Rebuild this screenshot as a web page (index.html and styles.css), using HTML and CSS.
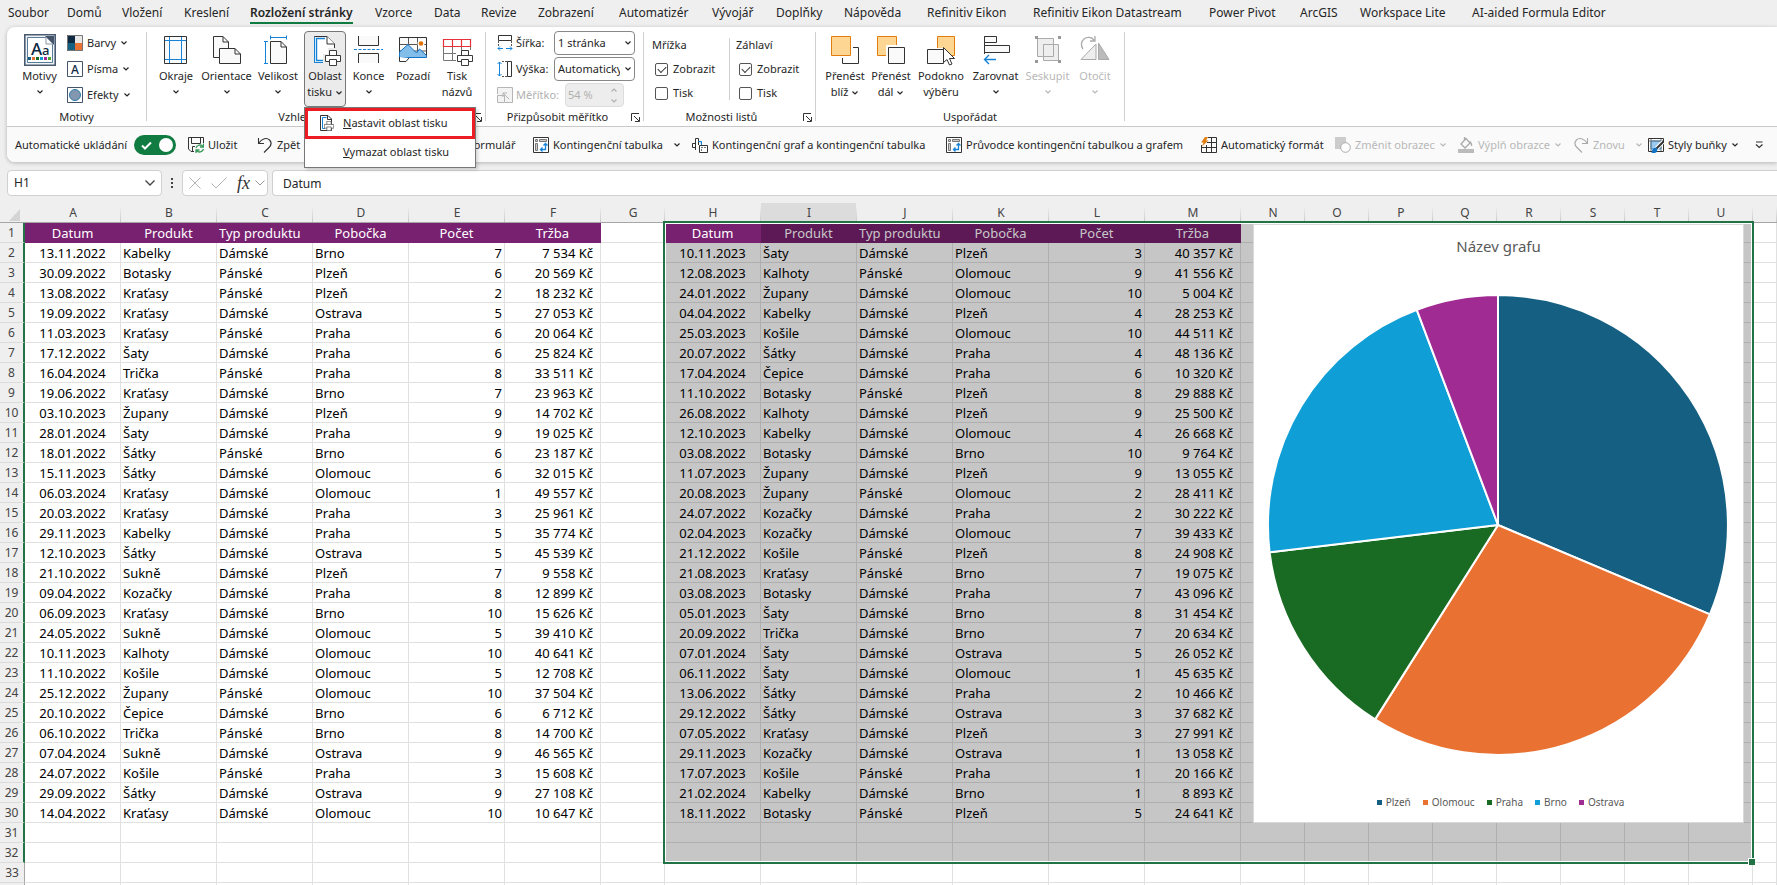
FILE: index.html
```html
<!DOCTYPE html>
<html lang="cs">
<head>
<meta charset="utf-8">
<title>Sešit – Rozložení stránky</title>
<link rel="stylesheet" href="styles.css">
</head>
<body>
<svg class="defs" aria-hidden="true">
  <symbol id="chev" viewBox="0 0 8 6"><path d="M1.500 1.500L4 4 6.500 1.500" fill="none" stroke="currentColor" stroke-width="1.200"/></symbol>
  <symbol id="printer" viewBox="0 0 16 16"><g fill="#fff" stroke="#3b3b3b"><path d="M4.500 5.500V.5H11.500V5.500"/><path d="M.5 5.500H15.500V11.500H.5Z"/><path d="M4.500 9.500H11.500V15.500H4.500Z"/></g></symbol>
  <symbol id="launch" viewBox="0 0 9 9"><path d="M.5 8V.5H8M3 3l5 5M8.500 4V8.500H4" fill="none" stroke="#333"/></symbol>
  <symbol id="pivot" viewBox="0 0 16 16"><path d="M.5.5H15.500V15.500H.5Z" fill="#fff" stroke="#333"/><path d="M2.500 2.500h2v2h-2zM6.500 2.500h7v2h-7zM2.500 6.500h2v7h-2z" fill="#ccc" stroke="#777"/><path d="M8 12.500H12.500V7M9.500 10.500l-2 2 2 2M10.500 8.500l2-2 2 2" fill="none" stroke="#1683d8" stroke-width="1.300"/></symbol>
</svg>

<nav class="tabs">
  <button>Soubor</button><button>Domů</button><button>Vložení</button><button>Kreslení</button><button class="active">Rozložení stránky</button><button>Vzorce</button><button>Data</button><button>Revize</button><button>Zobrazení</button><button>Automatizér</button><button>Vývojář</button><button>Doplňky</button><button>Nápověda</button><button>Refinitiv Eikon</button><button>Refinitiv Eikon Datastream</button><button>Power Pivot</button><button>ArcGIS</button><button>Workspace Lite</button><button>AI-aided Formula Editor</button>
</nav>

<header class="ribbon">
  <div class="groups">
    <section class="group g-themes">
      <div class="body">
        <button class="big"><svg class="ic" viewBox="0 0 32 32"><path d="M.8.8H31.200V31.200H.8Z" fill="#eef3f7" stroke="#4a5a70" stroke-width="1.600"/><path d="M3.500 3.500H22L28.500 10V28.500H3.500Z" fill="#fff" stroke="#5b7c99"/><path d="M21 2h9v9z" fill="#44546a"/><path d="M22 3V10H29Z" fill="#fff" stroke="#8a96a5"/><text x="7" y="21" class="aa" font-size="17">A</text><text x="18" y="21" class="aa" font-size="13">a</text><path d="M4 23h3v3H4z" fill="#156082"/><path d="M8 23h3v3H8z" fill="#e97132"/><path d="M12 23h3v3h-3z" fill="#196b24"/><path d="M16 23h3v3h-3z" fill="#0f9ed5"/><path d="M20 23h3v3h-3z" fill="#a02b93"/><path d="M24 23h3v3h-3z" fill="#4ea72e"/></svg><span>Motivy</span><svg class="cv"><use href="#chev"/></svg></button>
        <div class="stack">
          <button class="small"><svg class="si" viewBox="0 0 16 16"><path d="M0 0h8v8H0z" fill="#0e2841"/><path d="M8 0h8v8H8z" fill="#e8e8e8"/><path d="M0 8h8v8H0z" fill="#156082"/><path d="M8 8h8v8H8z" fill="#e97132"/><path d="M.5.5h15v15H.5z" fill="none" stroke="#777"/></svg>Barvy<svg class="cv"><use href="#chev"/></svg></button>
          <button class="small"><svg class="si" viewBox="0 0 16 16"><path d="M.5.5h15v15H.5z" fill="#fff" stroke="#44546a"/><text x="4" y="13" class="aa" font-size="12">A</text></svg>Písma<svg class="cv"><use href="#chev"/></svg></button>
          <button class="small"><svg class="si" viewBox="0 0 16 16"><path d="M.5.5h15v15H.5z" fill="#fff" stroke="#44546a"/><circle cx="8" cy="8" r="5.500" fill="#8497b0" stroke="#2a7ca8"/></svg>Efekty<svg class="cv"><use href="#chev"/></svg></button>
        </div>
      </div>
      <div class="caption">Motivy</div>
    </section>
    <i class="sep"></i>
    <section class="group g-page">
      <div class="body">
        <button class="big"><svg class="ic" viewBox="0 0 32 32"><path d="M4.500 2.500H26.500V29.500H4.500Z" fill="#fafafa" stroke="#333"/><path d="M9.500 3V29M21.500 3V29M5 6.500H26M5 25.500H26" stroke="#1683d8"/></svg><span>Okraje</span><svg class="cv"><use href="#chev"/></svg></button>
        <button class="big"><svg class="ic" viewBox="0 0 32 32"><path d="M8 23.500H2.500V2.500H12L17.500 8V14" fill="#fafafa" stroke="#333"/><path d="M12 2.500V8H17.500" fill="none" stroke="#333"/><path d="M8.500 14.500H24L29.500 20V29.500H8.500Z" fill="#fafafa" stroke="#333"/><path d="M24 14.500V20H29.500" fill="none" stroke="#333"/></svg><span>Orientace</span><svg class="cv"><use href="#chev"/></svg></button>
        <button class="big"><svg class="ic" viewBox="0 0 32 32"><path d="M8.500 7.500H19L24.500 13V29.500H8.500Z" fill="#fafafa" stroke="#333"/><path d="M19 7.500V13H24.500" fill="none" stroke="#333"/><path d="M8.500 1.500v4M24.500 1.500v4M8.500 3.500h16M2 7.500h4M2 29.500h4M3.500 7.500v22" fill="none" stroke="#1683d8"/></svg><span>Velikost</span><svg class="cv"><use href="#chev"/></svg></button>
        <div class="drop">
          <button class="big pressed"><svg class="ic" viewBox="0 0 32 32"><path d="M5.500 2.500H18L25.500 10V28.500H5.500Z" fill="#fff" stroke="#333"/><path d="M16 4.500H7.500V26.500H15" fill="none" stroke="#1683d8" stroke-width="1.400"/><path d="M5.500 3V28.500H14" fill="none" stroke="#1683d8"/><path d="M18 2.500V10H25.500" fill="#fff" stroke="#333"/><path d="M14 20H19V14H29V20H32V32H14Z" fill="#ebebeb"/><use href="#printer" x="16" y="16" width="16" height="16"/></svg><span>Oblast</span><span>tisku <svg class="cv"><use href="#chev"/></svg></span></button>
          <div class="menu">
            <button class="marked"><svg class="mi" viewBox="0 0 16 16"><path d="M1.500.5H9L12.500 4V15.500H1.500Z" fill="#fff" stroke="#333"/><path d="M7.500 2.500H3.500V13.500H6" fill="none" stroke="#1683d8"/><path d="M8.500.5V4.500H12.500" fill="none" stroke="#333"/><use href="#printer" x="5" y="6" width="10" height="10"/></svg><span><u>N</u>astavit oblast tisku</span></button>
            <button><i class="mi"></i><span><u>V</u>ymazat oblast tisku</span></button>
          </div>
        </div>
        <button class="big"><svg class="ic" viewBox="0 0 32 32"><path d="M5.500 2V11.500H25.500V2M5.500 29V19.500H25.500V29" fill="#fafafa" stroke="#333"/><path d="M1 15.500H30" stroke="#1683d8" stroke-dasharray="3 1.500"/></svg><span>Konce</span><svg class="cv"><use href="#chev"/></svg></button>
        <button class="big"><svg class="ic" viewBox="0 0 32 32"><path d="M2.500 3.500H29.500V23H2.500Z" fill="#fafafa" stroke="#333"/><path d="M11.500 4V22M20.500 4V22M3 10.500H29M3 17H29" stroke="#555"/><path d="M2.500 18L11 10.500 19.500 19 22.500 15 29.500 21.500V23.500H2.500Z" fill="#83bdea" stroke="#1272c4"/><circle cx="24" cy="9.500" r="3.500" fill="#fff"/><circle cx="24" cy="9.500" r="2.300" fill="#e07000"/><path d="M2.500 23V27.500H9L12 24" fill="#fff" stroke="#333"/></svg><span>Pozadí</span></button>
        <button class="big"><svg class="ic" viewBox="0 0 32 32"><path d="M2.500 12.500V26.500H15M11.500 13V26M20.500 13V17M29.500 13V16M3 19.500H15" fill="none" stroke="#777"/><path d="M2.500 5.500H29.500V12.500H2.500ZM11.500 6V12M20.500 6V12" fill="#fff" stroke="#e8303a" stroke-width="1.200"/><use href="#printer" x="16" y="16" width="16" height="16"/></svg><span>Tisk</span><span>názvů</span></button>
      </div>
      <div class="caption">Vzhled stránky<svg class="launch"><use href="#launch"/></svg></div>
    </section>
    <i class="sep"></i>
    <section class="group g-scale">
      <div class="body stack">
        <div class="field"><svg class="si" viewBox="0 0 16 16"><path d="M1.500.5H14.500V5.500H1.500Z" fill="#fff" stroke="#333"/><path d="M1.500 6V11M14.500 6V11" stroke="#555" stroke-dasharray="2 1"/><path d="M1 13.500H6M9 13.500H15M3 11.500l-2 2 2 2M13 11.500l2 2-2 2" fill="none" stroke="#1683d8"/></svg><label for="w">Šířka:</label><span class="combo"><select id="w"><option>1 stránka</option></select><svg class="cv"><use href="#chev"/></svg></span></div>
        <div class="field"><svg class="si" viewBox="0 0 16 16"><path d="M2.500 1V15M.5 3l2-2 2 2M.5 13l2 2 2-2" fill="none" stroke="#1683d8"/><path d="M10.500.5H14.500V15.500H10.500Z" fill="#fff" stroke="#333"/><path d="M5 .5H10M5 15.500H10" stroke="#555" stroke-dasharray="2 1"/></svg><label for="h">Výška:</label><span class="combo"><select id="h"><option>Automaticky</option></select><svg class="cv"><use href="#chev"/></svg></span></div>
        <div class="field off"><svg class="si" viewBox="0 0 16 16"><path d="M.5 7V.5H15.500V15.500H8M.5 8.500H7.500V15.500H.5ZM6 6l6 6M6 10V6H10" fill="#f3f3f3" stroke="#b5b5b5"/></svg><label for="m">Měřítko:</label><span class="spin"><input id="m" value="54 %" disabled><span class="arrows"><svg class="cv up"><use href="#chev"/></svg><svg class="cv"><use href="#chev"/></svg></span></span></div>
      </div>
      <div class="caption">Přizpůsobit měřítko<svg class="launch"><use href="#launch"/></svg></div>
    </section>
    <i class="sep"></i>
    <section class="group g-sheet">
      <div class="body">
        <div class="checks"><span>Mřížka</span><label><input type="checkbox" checked>Zobrazit</label><label><input type="checkbox">Tisk</label></div>
        <i class="sep inner"></i>
        <div class="checks"><span>Záhlaví</span><label><input type="checkbox" checked>Zobrazit</label><label><input type="checkbox">Tisk</label></div>
      </div>
      <div class="caption">Možnosti listů<svg class="launch"><use href="#launch"/></svg></div>
    </section>
    <i class="sep"></i>
    <section class="group g-arrange">
      <div class="body">
        <button class="big"><svg class="ic" viewBox="0 0 32 32"><path d="M13.500 13.500H29.500V29.500H13.500Z" fill="#fff" stroke="#333"/><path d="M1 1H24V24H1Z" fill="#fff"/><path d="M2.500 2.500H21.500V21.500H2.500Z" fill="#fdd693" stroke="#e07f10"/></svg><span>Přenést</span><span>blíž <svg class="cv"><use href="#chev"/></svg></span></button>
        <button class="big"><svg class="ic" viewBox="0 0 32 32"><path d="M2.500 2.500H21.500V21.500H2.500Z" fill="#fdd693" stroke="#e07f10"/><path d="M11 11H32V32H11Z" fill="#fff"/><path d="M13.500 13.500H29.500V29.500H13.500Z" fill="#fafafa" stroke="#333"/></svg><span>Přenést</span><span>dál <svg class="cv"><use href="#chev"/></svg></span></button>
        <button class="big"><svg class="ic" viewBox="0 0 32 32"><path d="M12.500 2.500H29.500V21.500H12.500Z" fill="#fdd693" stroke="#e07f10"/><path d="M1 14H20V31H1Z" fill="#fff"/><path d="M2.500 15.500H18.500V29.500H2.500Z" fill="#fafafa" stroke="#333"/><path d="M18.500 13.500V28.500L22 25.500 24.500 31 27 30 24.500 24.500H29.500Z" fill="#fff" stroke="#333"/></svg><span>Podokno</span><span>výběru</span></button>
        <button class="big"><svg class="ic" viewBox="0 0 32 32"><path d="M4.500 2V30" stroke="#333"/><path d="M4.500 2.500H16.500V8.500H4.500ZM4.500 11.500H29.500V18.500H4.500Z" fill="#fafafa" stroke="#333"/><path d="M3 20H6V31H3Z" fill="#fff"/><path d="M4.500 25.500H16M9 21l-4.500 4.500L9 30" fill="none" stroke="#1683d8" stroke-width="1.400"/></svg><span>Zarovnat</span><svg class="cv"><use href="#chev"/></svg></button>
        <button class="big" disabled><svg class="ic" viewBox="0 0 32 32"><g fill="#eee" stroke="#aaa"><path d="M5.500 4.500H21.500V22.500H5.500Z"/><path d="M11.500 10.500H26.500V26.500H11.500Z"/><path d="M11.500 10.500H21.500V22.500H11.500Z"/></g><path d="M3 2h3v3H3zM26 2h3v3h-3zM3 26h3v3H3zM26 26h3v3h-3z" fill="#999"/></svg><span>Seskupit</span><svg class="cv"><use href="#chev"/></svg></button>
        <button class="big" disabled><svg class="ic" viewBox="0 0 32 32"><path d="M2 25.500H17V10Z" fill="#eee" stroke="#aaa"/><path d="M19.500 9V25.500H30Z" fill="#bbb" stroke="#aaa"/><path d="M4 15A7 7 0 1 1 15 6M11 7h5V2" fill="none" stroke="#aaa" stroke-width="1.300"/></svg><span>Otočit</span><svg class="cv"><use href="#chev"/></svg></button>
      </div>
      <div class="caption">Uspořádat</div>
    </section>
    <i class="sep"></i>
  </div>
  <div class="quick">
    <label for="auto">Automatické ukládání</label>
    <span class="toggle"><input id="auto" type="checkbox" checked><svg viewBox="0 0 42 20"><path d="M8 10.500l3 3 6-6" fill="none" stroke="#fff" stroke-width="2"/><circle cx="32" cy="10" r="7" fill="#fff"/></svg></span>
    <button><svg class="si" viewBox="0 0 16 16"><path d="M6 14.500H3L.5 12V.5H15.500V6M3.500 1V6.500H12.500V1M4.500 14V9.500H7" fill="none" stroke="#333"/><path d="M8 11a4 4 0 0 1 7-1.500M15.500 6.500V10H12M15.500 12a4 4 0 0 1-7 1.500M8 16V13h3.500" fill="none" stroke="#3a9a5c" stroke-width="1.300"/></svg>Uložit</button>
    <button><svg class="si" viewBox="0 0 16 16"><path d="M1.500 1V6.500H7M1.500 6.500C5 1 10 .5 12.500 3S14 8.500 12 10.500L7 15.500" fill="none" stroke="#333" stroke-width="1.100"/></svg>Zpět</button>
    <button><svg class="si" viewBox="0 0 16 16"><path d="M.5.5H15.500V15.500H.5Z" fill="#fff" stroke="#333"/></svg>Formulář</button>
    <button><svg class="si"><use href="#pivot"/></svg>Kontingenční tabulka<svg class="cv far"><use href="#chev"/></svg></button>
    <button><svg class="si" viewBox="0 0 16 16"><path d="M3 10.500H.5V6.500H3.500M3.500 13V1.500H6.500V8" fill="#fff" stroke="#333"/><path d="M6.500 4.500H9.500V8" fill="#bfdcf5" stroke="#1683d8"/><path d="M7.500 8.500H15.500V15.500H7.500Z" fill="#fff" stroke="#333"/><path d="M9 10.500H11M12 10.500H14M9.500 12V14" stroke="#777"/></svg>Kontingenční graf a kontingenční tabulka</button>
    <button><svg class="si"><use href="#pivot"/></svg>Průvodce kontingenční tabulkou a grafem</button>
    <button><svg class="si" viewBox="0 0 16 16"><path d="M7 .5H15.500V15.500H.5V8M15 5.500H6M15 10.500H1M5.500 8V15M10.500 1V15" fill="none" stroke="#333"/><path d="M4 0H7L5 3.500H7.500L1 9.500 2.500 5.500H0Z" fill="#e07f10"/></svg>Automatický formát</button>
    <button disabled><svg class="si" viewBox="0 0 16 16"><path d="M0 0H11V6L6 12H0Z" fill="#ccc"/><circle cx="10.500" cy="10.500" r="4.800" fill="#fff" stroke="#aaa"/></svg>Změnit obrazec<svg class="cv"><use href="#chev"/></svg></button>
    <button disabled><svg class="si" viewBox="0 0 16 16"><path d="M0 12h16v4H0z" fill="#bbb"/><path d="M8 1.500L3 7l4 4 5-5ZM6.500 0V4M12 4.500Q14 7 13.500 9" fill="none" stroke="#aaa" stroke-width="1.300"/></svg>Výplň obrazce<svg class="cv"><use href="#chev"/></svg></button>
    <button disabled><svg class="si" viewBox="0 0 16 16"><path d="M14.500 1V6.500H9M14.500 6.500C11 1 6 .5 3.500 3S2 8.500 4 10.500L9 15.500" fill="none" stroke="#aaa" stroke-width="1.100"/></svg>Znovu<svg class="cv far"><use href="#chev"/></svg></button>
    <button><svg class="si" viewBox="0 0 16 16"><path d="M.5 1.500H15.500V14.500H.5Z" fill="#fff" stroke="#333"/><path d="M3 4H13V12H3Z" fill="#9cc9f0" stroke="#1683d8"/><path d="M1 4H15M3 2V14M13 2V14" stroke="#777"/><path d="M15 5L8 12" stroke="#fff" stroke-width="4"/><path d="M15.500 4.500L8.500 11.500" stroke="#333" stroke-width="2"/><path d="M8 10.500Q4 11 3.500 16H7Q9.500 15 9.500 12Z" fill="#1272c4"/></svg>Styly buňky<svg class="cv"><use href="#chev"/></svg></button>
    <button aria-label="Další příkazy"><svg class="more" viewBox="0 0 8 8"><path d="M1 1H7.500M1 3.500L4.200 6.500 7.500 3.500" fill="none" stroke="#333" stroke-width="1.200"/></svg></button>
  </div>
</header>

<div class="fbar">
  <div class="namebox"><input value="H1" aria-label="Pole názvů"><svg class="wide" viewBox="0 0 10 6"><path d="M.5.5L5 5 9.500.5" fill="none" stroke="#444" stroke-width="1.300"/></svg></div>
  <svg class="dots" viewBox="0 0 4 12"><path d="M1 1h2v2H1zM1 5h2v2H1zM1 9h2v2H1z" fill="#444"/></svg>
  <div class="fx"><svg class="fi" viewBox="0 0 12 12"><path d="M.5.5l11 11M11.500.5L.5 11.500" stroke="#b5b5b5" fill="none"/></svg><svg class="fi wider" viewBox="0 0 16 12"><path d="M.5 6.500L5 11 15.500.5" stroke="#b5b5b5" fill="none"/></svg><span>fx</span><svg class="wide" viewBox="0 0 10 6"><path d="M.5.5L5 5 9.500.5" fill="none" stroke="#999"/></svg></div>
  <input class="formula" value="Datum" aria-label="Řádek vzorců">
</div>

<main class="sheet">
  <table class="grid">
    <colgroup id="cols"></colgroup>
    <thead><tr id="letters"></tr></thead>
    <tbody id="rows"></tbody>
  </table>
  <div class="range"><i></i></div>
  <figure class="chart">
    <figcaption>Název grafu</figcaption>
    <svg class="pie" viewBox="-230 -231 462 462">
      <g stroke="#fff" stroke-width="2" stroke-linejoin="round">
        <path fill="#156082" d="M0 0V-230A230 230 0 0 1 211.900 89.300Z"/>
        <path fill="#e97132" d="M0 0L211.900 89.300A230 230 0 0 1 -122.900 194.400Z"/>
        <path fill="#196b24" d="M0 0L-122.900 194.400A230 230 0 0 1 -228.400 27.300Z"/>
        <path fill="#0f9ed5" d="M0 0L-228.400 27.300A230 230 0 0 1 -81.200 -215.200Z"/>
        <path fill="#a02b93" d="M0 0L-81.200 -215.200A230 230 0 0 1 0 -230Z"/>
      </g>
    </svg>
    <ul class="legend"><li class="c1">Plzeň</li><li class="c2">Olomouc</li><li class="c3">Praha</li><li class="c4">Brno</li><li class="c5">Ostrava</li></ul>
  </figure>
</main>
<script src="script.js"></script>
</body>
</html>
```

FILE: styles.css
```css
* { box-sizing: border-box; }
body {
  margin: 0;
  height: 100vh;
  overflow: hidden;
  display: flex;
  flex-direction: column;
  background: #efefef;
  color: #262626;
  font: 11px/16px "Noto Sans", "Open Sans", sans-serif;
}
button, input, select { font: inherit; color: inherit; }
button { border: 0; background: none; padding: 0; white-space: nowrap; text-align: left; }
button:disabled { color: #b8b8b8; }
svg { display: block; flex: none; }
.defs { position: absolute; width: 0; height: 0; }
.cv { width: 8px; height: 6px; display: inline-block; }
.aa { font-family: "Noto Sans", sans-serif; fill: #0e2841; font-weight: 500; }

/* ribbon tabs */
.tabs {
  flex: none;
  height: 27px;
  padding-left: 8px;
  display: grid;
  grid-template-columns: 59px 55px 62px 66px 125px 59px 47px 57px 81px 93px 64px 68px 83px 106px 176px 91px 60px 112px auto;
  font-size: 12px;
  line-height: 18px;
  align-items: start;
  justify-items: start;
}
.tabs button { height: 24px; padding-top: 4px; border-bottom: 2px solid transparent; display: flex; align-items: start; }
.tabs .active { font-weight: 600; border-color: #107c41; }

/* ribbon */
.ribbon {
  flex: none;
  margin-left: 7px;
  border-radius: 8px 0 0 8px;
  background: #fff;
  box-shadow: 0 1px 4px rgba(0, 0, 0, .25);
  position: relative;
  z-index: 2;
}
.groups { display: flex; height: 100px; padding-top: 4px; border-bottom: 1px solid #c8c8c8; }
.sep { flex: none; width: 1px; margin: 1px 0 5px; background: #d0d0d0; }
.sep.inner { margin: 7px 6px; }
.group { flex: none; display: flex; flex-direction: column; }
.body { display: flex; height: 76px; }
.caption { margin-top: 2px; text-align: center; position: relative; }
.launch { position: absolute; right: 3px; top: 4px; width: 9px; height: 9px; }
.g-themes { width: 139px; }
.g-page { width: 338px; }
.g-scale { width: 157px; }
.g-sheet { width: 171px; }
.g-sheet .caption { padding-right: 16px; }
.g-arrange { width: 308px; }
.g-themes .body { padding-left: 9px; display: grid; grid-template-columns: 47px 1fr; column-gap: 4px; }
.g-page .body { padding-left: 4px; display: grid; grid-template-columns: 50px 51px 52px 42px 45px 44px 44px; }
.g-arrange .body { padding-left: 6px; display: grid; grid-template-columns: 46px 46px 54px 55px 49px 46px; }
.g-scale .body { padding-left: 11px; }
.g-scale .caption { padding-right: 14px; }
.g-sheet .body { padding-left: 8px; }

.big { display: flex; flex-direction: column; align-items: center; padding-top: 3px; width: 100%; height: 76px; }
.big .ic { width: 32px; height: 32px; margin-bottom: 2px; }
.big > .cv { margin-top: 5px; }
.pressed { background: #ebebeb; border: 1px solid #777; border-radius: 4px; padding-top: 2px; }
.stack { display: flex; flex-direction: column; gap: 2px; }
.small { display: flex; align-items: center; gap: 4px; height: 24px; }
.si { width: 16px; height: 16px; }

.drop { position: relative; }
.menu {
  position: absolute;
  z-index: 5;
  left: 0;
  top: 76px;
  width: 172px;
  background: #fff;
  border: 1px solid #777;
  box-shadow: 2px 2px 3px rgba(0, 0, 0, .15);
  padding-bottom: 3px;
}
.menu button { display: flex; align-items: center; width: 100%; height: 25px; padding-left: 14px; }
.menu .marked { height: 31px; border: 3px solid #ed1c24; padding: 0 0 2px 11px; }
.mi { width: 16px; height: 16px; margin-right: 8px; }

.field { display: flex; align-items: center; height: 24px; gap: 3px; white-space: nowrap; }
.field label { width: 35px; flex: none; }
.combo { width: 81px; height: 24px; position: relative; }
.combo select {
  width: 100%; height: 24px; padding: 0 14px 0 3px;
  border: 1px solid #888; border-radius: 4px; background: #fff;
  appearance: none; overflow: hidden;
}
.combo .cv { position: absolute; right: 3px; top: 9px; }
.off { color: #b0b0b0; }
.off label { width: 46px; }
.spin { display: flex; width: 59px; height: 24px; background: #ededed; border: 1px solid #dcdcdc; border-radius: 4px; }
.spin input { width: 44px; border: 0; background: none; padding: 0 2px; color: #b0b0b0; }
.arrows { display: flex; flex-direction: column; justify-content: space-around; }
.up { transform: rotate(180deg); }

.checks { width: 71px; display: flex; flex-direction: column; gap: 8px; padding-top: 6px; }
.checks label { display: flex; align-items: center; gap: 5px; padding-left: 3px; }
.checks input {
  appearance: none; margin: 0; width: 13px; height: 13px;
  border: 1px solid #555; border-radius: 2px; background: #fff; display: grid; place-items: center;
}
.checks input:checked::after { content: ""; width: 7px; height: 4px; border: solid #333; border-width: 0 0 1px 1px; transform: rotate(-45deg); margin-bottom: 2px; }

/* quick access bar */
.quick {
  height: 35px;
  padding-left: 8px;
  border-radius: 0 0 0 8px;
  background: #fafafa;
  display: grid;
  grid-template-columns: 119px 54px 69px 191px 85px 159px 254px 255px 134px 123px 115px 75px 107px auto;
  align-items: center;
  white-space: nowrap;
}
.quick button { display: flex; align-items: center; gap: 4px; }
.far { margin-left: 6px; }
.more { width: 8px; height: 8px; }
.toggle { position: relative; width: 42px; height: 20px; }
.toggle input { appearance: none; margin: 0; width: 42px; height: 20px; border-radius: 10px; background: #107c41; }
.toggle svg { position: absolute; inset: 0; pointer-events: none; }

/* formula bar */
.fbar { flex: none; display: flex; align-items: center; height: 26px; margin: 8px 0 7px 7px; font-size: 12px; }
.namebox, .fx, .formula { height: 26px; border: 1px solid #d0d0d0; border-radius: 4px; background: #fff; }
.namebox { width: 155px; display: flex; align-items: center; padding: 0 6px; }
.namebox input { flex: 1; min-width: 0; border: 0; padding: 0; background: none; }
.wide { width: 10px; height: 6px; }
.dots { width: 4px; height: 12px; margin: 0 8px; }
.fx { width: 86px; display: flex; align-items: center; gap: 10px; padding: 0 2px 0 6px; }
.fi { width: 12px; height: 12px; }
.wider { width: 16px; }
.fx span { font: italic 18px/20px "Liberation Serif", serif; color: #333; margin-right: -5px; }
.formula { flex: 1; margin-left: 4px; border-right: 0; border-radius: 4px 0 0 4px; padding: 0 10px; }

/* worksheet */
.sheet { flex: 1; position: relative; overflow: hidden; }
.grid { table-layout: fixed; width: 100%; border-spacing: 0; background: #fff; font-size: 13px; line-height: 18px; color: #000; }
.grid th { font-weight: 400; padding: 0; }
.grid thead th { height: 20px; background: #efefef linear-gradient(#efefef 20%, #c8c8c8) right / 1px 100% no-repeat; border-bottom: 1px solid #a6a6a6; color: #444; font-size: 12px; }
.grid thead .hover { background-color: #dcdcdc; }
.grid thead .corner { background-image: none; }
.corner svg { width: 11px; height: 12px; margin: 4px 0 0 9px; }
.grid tbody th { height: 20px; background: #efefef; border-right: 2px solid #217346; border-bottom: 1px solid #dcdcdc; color: #444; font-size: 12px; }
.grid tbody .past th { border-right: 1px solid #a6a6a6; }
.grid td { height: 20px; padding: 0 2px; border: solid #e0e0e0; border-width: 0 1px 1px 0; white-space: nowrap; overflow: hidden; }
.grid .sel { background: #c6c6c6; border-color: #afafaf; }
.grid .head { background: #792171; color: #fff; text-align: center; border-color: #792171; }
.grid .head.sel { background: #5c1955; border-color: #5c1955; color: #c8c8c8; }
.grid .head.flush { text-align: left; }
.grid .mid { text-align: center; }
.grid .num { text-align: right; }
.grid .cur { text-align: right; padding-right: 7px; }
.colRow { width: 25px; }
.colData { width: 96px; }
.colPlain { width: 64px; }
.range { position: absolute; left: 663px; top: 18px; width: 1091px; height: 643px; border: 2px solid #217346; box-shadow: inset 0 0 0 1px #fff; pointer-events: none; }
.range i { position: absolute; right: -3px; bottom: -3px; width: 7px; height: 7px; background: #217346; border: solid #fff; border-width: 1px 0 0 1px; }

/* chart */
.chart {
  position: absolute; left: 1253px; top: 21px; width: 491px; height: 599px; margin: 0;
  background: #fff; border: 1px solid #d9d9d9; color: #595959;
  display: flex; flex-direction: column; align-items: center;
}
.chart figcaption { font-size: 15px; line-height: 20px; margin: 11px 0 38px; }
.pie { width: 462px; height: 462px; }
.legend { display: flex; gap: 12px; margin: 38px 0 0; padding: 0 0 0 4px; list-style: none; font-size: 10px; }
.legend li { display: flex; align-items: center; gap: 4px; }
.legend li::before { content: ""; width: 5px; height: 5px; background: currentColor; }
.legend .c1::before { background: #156082; }
.legend .c2::before { background: #e97132; }
.legend .c3::before { background: #196b24; }
.legend .c4::before { background: #0f9ed5; }
.legend .c5::before { background: #a02b93; }
```

FILE: script.js
```js
const heads = ["Datum", "Produkt", "Typ produktu", "Pobočka", "Počet", "Tržba"];
const left = `13.11.2022,Kabelky,D,Brno,7,7 534
30.09.2022,Botasky,P,Plzeň,6,20 569
13.08.2022,Kraťasy,P,Plzeň,2,18 232
19.09.2022,Kraťasy,D,Ostrava,5,27 053
11.03.2023,Kraťasy,P,Praha,6,20 064
17.12.2022,Šaty,D,Praha,6,25 824
16.04.2024,Trička,P,Praha,8,33 511
19.06.2022,Kraťasy,D,Brno,7,23 963
03.10.2023,Župany,D,Plzeň,9,14 702
28.01.2024,Šaty,D,Praha,9,19 025
18.01.2022,Šátky,P,Brno,6,23 187
15.11.2023,Šátky,D,Olomouc,6,32 015
06.03.2024,Kraťasy,D,Olomouc,1,49 557
20.03.2022,Kraťasy,D,Praha,3,25 961
29.11.2023,Kabelky,D,Praha,5,35 774
12.10.2023,Šátky,D,Ostrava,5,45 539
21.10.2022,Sukně,D,Plzeň,7,9 558
09.04.2022,Kozačky,D,Praha,8,12 899
06.09.2023,Kraťasy,D,Brno,10,15 626
24.05.2022,Sukně,D,Olomouc,5,39 410
10.11.2023,Kalhoty,D,Olomouc,10,40 641
11.10.2022,Košile,D,Olomouc,5,12 708
25.12.2022,Župany,P,Olomouc,10,37 504
20.10.2022,Čepice,D,Brno,6,6 712
06.10.2022,Trička,P,Brno,8,14 700
07.04.2024,Sukně,D,Ostrava,9,46 565
24.07.2022,Košile,P,Praha,3,15 608
29.09.2022,Šátky,D,Ostrava,9,27 108
14.04.2022,Kraťasy,D,Olomouc,10,10 647`;
const right = `10.11.2023,Šaty,D,Plzeň,3,40 357
12.08.2023,Kalhoty,P,Olomouc,9,41 556
24.01.2022,Župany,D,Olomouc,10,5 004
04.04.2022,Kabelky,D,Plzeň,4,28 253
25.03.2023,Košile,D,Olomouc,10,44 511
20.07.2022,Šátky,D,Praha,4,48 136
17.04.2024,Čepice,D,Praha,6,10 320
11.10.2022,Botasky,P,Plzeň,8,29 888
26.08.2022,Kalhoty,D,Plzeň,9,25 500
12.10.2023,Kabelky,D,Olomouc,4,26 668
03.08.2022,Botasky,D,Brno,10,9 764
11.07.2023,Župany,D,Plzeň,9,13 055
20.08.2023,Župany,P,Olomouc,2,28 411
24.07.2022,Kozačky,D,Praha,2,30 222
02.04.2023,Kozačky,D,Olomouc,7,39 433
21.12.2022,Košile,P,Plzeň,8,24 908
21.08.2023,Kraťasy,P,Brno,7,19 075
03.08.2023,Botasky,D,Praha,7,43 096
05.01.2023,Šaty,D,Brno,8,31 454
20.09.2022,Trička,D,Brno,7,20 634
07.01.2024,Šaty,D,Ostrava,5,26 052
06.11.2022,Šaty,D,Olomouc,1,45 635
13.06.2022,Šátky,D,Praha,2,10 466
29.12.2022,Šátky,D,Ostrava,3,37 682
07.05.2022,Kraťasy,D,Plzeň,3,27 991
29.11.2023,Kozačky,D,Ostrava,1,13 058
17.07.2023,Košile,P,Praha,1,20 166
21.02.2024,Kabelky,D,Brno,1,8 893
18.11.2022,Botasky,P,Plzeň,5,24 641`;

const parse = text => text.split("\n").map(line => {
  const r = line.split(",");
  r[2] = r[2] === "D" ? "Dámské" : "Pánské";
  r[5] += " Kč";
  return r;
});
const tables = [parse(left), parse(right)];
const kinds = ["mid", "", "", "", "num", "cur"];
const letters = "ABCDEFGHIJKLMNOPQRSTU";
const isData = c => c < 6 || (c > 6 && c < 13);

document.getElementById("cols").innerHTML = '<col class="colRow">' +
  [...letters].map((_, c) => `<col class="${isData(c) ? "colData" : "colPlain"}">`).join("") + "<col>";
document.getElementById("letters").innerHTML =
  '<th class="corner"><svg viewBox="0 0 11 12"><path d="M11 0V12H0Z" fill="#d4d4d4"/></svg></th>' +
  [...letters].map(l => `<th${l === "I" ? ' class="hover"' : ""}>${l}</th>`).join("") + "<th></th>";

let html = "";
for (let r = 1; r <= 34; r++) {
  html += `<tr${r > 32 ? ' class="past"' : ""}><th>${r > 33 ? "" : r}</th>`;
  for (let c = 0; c < 22; c++) {
    const cls = [];
    let text = "";
    if (isData(c) && r <= 30) {
      const k = c % 7;
      text = r === 1 ? heads[k] : tables[c > 6 ? 1 : 0][r - 2][k];
      cls.push(r === 1 ? (k === 2 ? "head flush" : "head") : kinds[k]);
    }
    if (c > 6 && c < 21 && r <= 32 && !(c === 7 && r === 1)) cls.push("sel");
    html += `<td class="${cls.join(" ").trim()}">${text}</td>`;
  }
  html += "</tr>";
}
document.getElementById("rows").innerHTML = html;
```
